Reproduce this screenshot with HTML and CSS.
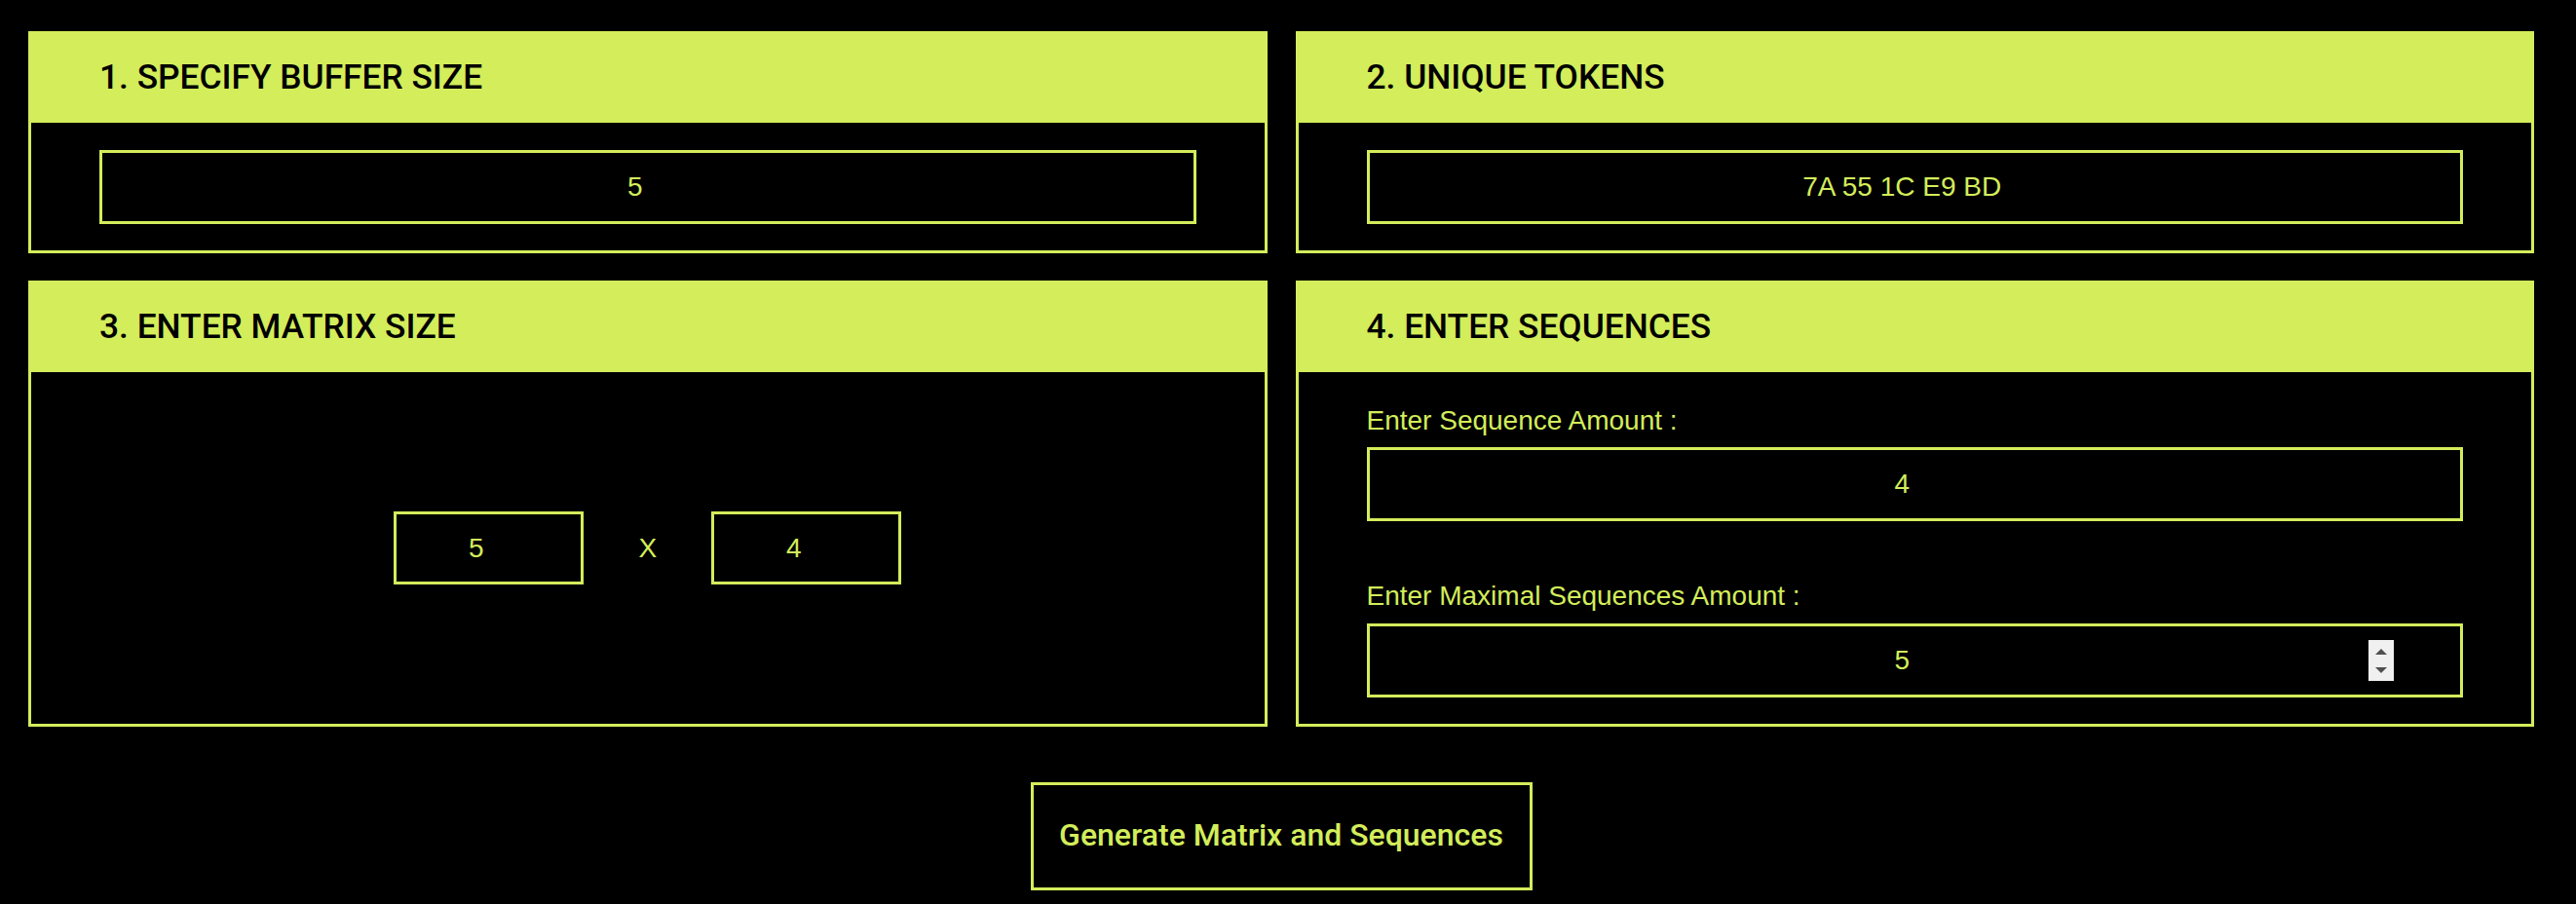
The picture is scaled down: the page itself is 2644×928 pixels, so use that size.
FILE: index.html
```html
<!DOCTYPE html>
<html lang="en">
<head>
<meta charset="utf-8">
<title>Breach Protocol Solver</title>
<link rel="stylesheet" href="styles.css">
</head>
<body>
<main class="page">
  <div class="grid">
    <section class="panel">
      <h2 class="panel-head">1. SPECIFY BUFFER SIZE</h2>
      <div class="panel-body">
        <input class="field" type="text" value="5">
      </div>
    </section>
    <section class="panel">
      <h2 class="panel-head">2. UNIQUE TOKENS</h2>
      <div class="panel-body">
        <input class="field" type="text" value="7A 55 1C E9 BD">
      </div>
    </section>
    <section class="panel">
      <h2 class="panel-head">3. ENTER MATRIX SIZE</h2>
      <div class="panel-body matrix-body">
        <input class="field small" type="text" value="5">
        <span class="times">X</span>
        <input class="field small" type="text" value="4">
      </div>
    </section>
    <section class="panel">
      <h2 class="panel-head">4. ENTER SEQUENCES</h2>
      <div class="panel-body seq-body">
        <label class="label">Enter Sequence Amount :</label>
        <input class="field" type="text" value="4">
        <label class="label second">Enter Maximal Sequences Amount :</label>
        <div class="spin-wrap">
          <input class="field" type="text" value="5">
          <span class="spinner"><span class="up"></span><span class="down"></span></span>
        </div>
      </div>
    </section>
  </div>
  <div class="actions">
    <button class="generate" type="button">Generate Matrix and Sequences</button>
  </div>
</main>
</body>
</html>
```

FILE: styles.css
```css
* { box-sizing: border-box; }

html, body {
  margin: 0;
  background: #000;
}

body {
  font-family: "Liberation Sans", Arial, sans-serif;
  color: #d3ed5b;
}

.page {
  width: 2572px;
  margin-left: 29px;
  padding-top: 32px;
}

.grid {
  display: grid;
  grid-template-columns: 1fr 1fr;
  column-gap: 29px;
  row-gap: 28px;
}

.panel {
  display: flex;
  flex-direction: column;
}

.panel-head {
  margin: 0;
  height: 94px;
  background: #d3ed5b;
  color: #000;
  display: flex;
  align-items: center;
  padding: 0 0 0 73px;
  font-family: Roboto, "Liberation Sans", sans-serif;
  font-weight: 500;
  font-size: 35.3px;
}

.panel-body {
  flex: 1;
  border: 3px solid #d3ed5b;
  border-top: 0;
  padding: 28px 70px 27px;
}

.field {
  display: block;
  width: 100%;
  height: 76px;
  background: #000;
  border: 3px solid #d3ed5b;
  border-radius: 0;
  outline: none;
  color: #d3ed5b;
  font-family: "Liberation Sans", Arial, sans-serif;
  font-size: 28px;
  text-align: center;
  padding: 0 96px 0 70px;
}

.matrix-body {
  display: flex;
  align-items: center;
  justify-content: center;
  padding: 0;
}

.field.small {
  width: 195px;
  height: 75px;
  padding: 0 26px 0 0;
}

.times {
  width: 131px;
  text-align: center;
  font-size: 28px;
}

.seq-body {
  padding-top: 34px;
}

.label {
  display: block;
  font-family: "Liberation Sans", Arial, sans-serif;
  font-size: 28px;
  line-height: 32px;
  margin-bottom: 11px;
}

.label.second {
  margin-top: 61px;
  margin-bottom: 12px;
}

.spin-wrap {
  position: relative;
}

.spinner {
  position: absolute;
  right: 71px;
  top: 17px;
  width: 26px;
  height: 42px;
  background: #f0f0f0;
  display: flex;
  flex-direction: column;
  align-items: center;
  justify-content: center;
  gap: 13px;
}

.spinner .up,
.spinner .down {
  width: 0;
  height: 0;
  border-left: 6px solid transparent;
  border-right: 6px solid transparent;
}

.spinner .up { border-bottom: 6px solid #505050; }
.spinner .down { border-top: 6px solid #505050; }

.actions {
  display: flex;
  justify-content: center;
  padding-top: 57px;
}

.generate {
  width: 515px;
  height: 111px;
  background: #000;
  border: 3px solid #d3ed5b;
  color: #d3ed5b;
  font-family: Roboto, "Liberation Sans", sans-serif;
  font-weight: 500;
  font-size: 32px;
  white-space: nowrap;
  padding: 0 0 4px;
  cursor: pointer;
}
```
